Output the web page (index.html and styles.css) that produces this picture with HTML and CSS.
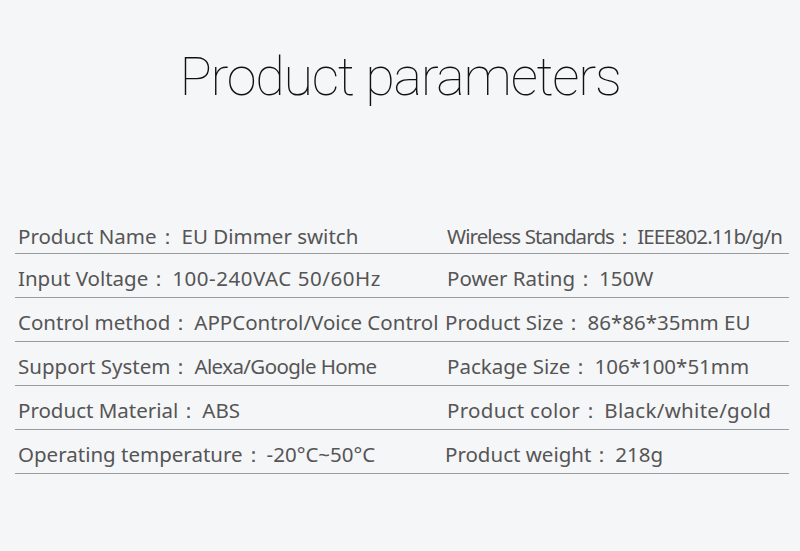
FILE: index.html
```html
<!DOCTYPE html>
<html>
<head>
<meta charset="utf-8">
<link rel="stylesheet" href="styles.css">
</head>
<body>
<div class="page">
  <h1 class="title">Product parameters</h1>
  <div class="table">
    <div class="row">
      <div class="cell">Product Name<span class="colon wide">：</span>EU Dimmer switch</div>
      <div class="cell narrower">Wireless Standards<span class="colon">：</span>IEEE802.11b/g/n</div>
    </div>
    <div class="row">
      <div class="cell">Input Voltage<span class="colon">：</span><span class="spread">100-240VAC 50/60Hz</span></div>
      <div class="cell">Power Rating<span class="colon">：</span>150W</div>
    </div>
    <div class="row">
      <div class="cell">Control method<span class="colon">：</span>APPControl/Voice Control</div>
      <div class="cell shift">Product Size<span class="colon">：</span>86*86*35mm EU</div>
    </div>
    <div class="row">
      <div class="cell">Support System<span class="colon">：</span><span class="narrow">Alexa/Google Home</span></div>
      <div class="cell">Package Size<span class="colon">：</span>106*100*51mm</div>
    </div>
    <div class="row">
      <div class="cell">Product Material<span class="colon">：</span>ABS</div>
      <div class="cell loose">Product color<span class="colon">：</span>Black/white/gold</div>
    </div>
    <div class="row">
      <div class="cell">Operating temperature<span class="colon">：</span>-20°C~50°C</div>
      <div class="cell shift">Product weight<span class="colon">：</span>218g</div>
    </div>
  </div>
</div>
</body>
</html>
```
FILE: styles.css
```css
html, body {
  margin: 0;
  padding: 0;
  background: #f5f6f8;
}
.page {
  width: 800px;
  height: 551px;
  overflow: hidden;
  padding-top: 42px;
  box-sizing: border-box;
}
.title {
  margin: 0;
  text-align: center;
  font-family: Roboto, sans-serif;
  font-weight: 100;
  font-size: 54px;
  line-height: 70px;
  letter-spacing: -1.3px;
  color: #111;
}
.table {
  margin: 98px 11px 0 15px;
}
.row {
  display: grid;
  grid-template-columns: 429px 1fr;
  height: 44px;
  border-bottom: 1px solid #9c9c9e;
  align-items: end;
  box-sizing: border-box;
  padding-bottom: 6px;
}
.row:first-child {
  padding-bottom: 4px;
}
.cell {
  font-family: "Noto Sans", sans-serif;
  font-size: 20.5px;
  line-height: 26px;
  letter-spacing: 0;
  color: #555;
  padding-left: 3px;
  white-space: nowrap;
}
.cell.shift {
  margin-left: -2px;
}
.colon {
  margin-right: 3px;
}
.colon.wide {
  margin-right: 4px;
}
.narrow {
  letter-spacing: -0.6px;
}
.narrower {
  letter-spacing: -0.9px;
}
.spread {
  letter-spacing: 0.55px;
}
.loose {
  letter-spacing: 0.3px;
}
```
